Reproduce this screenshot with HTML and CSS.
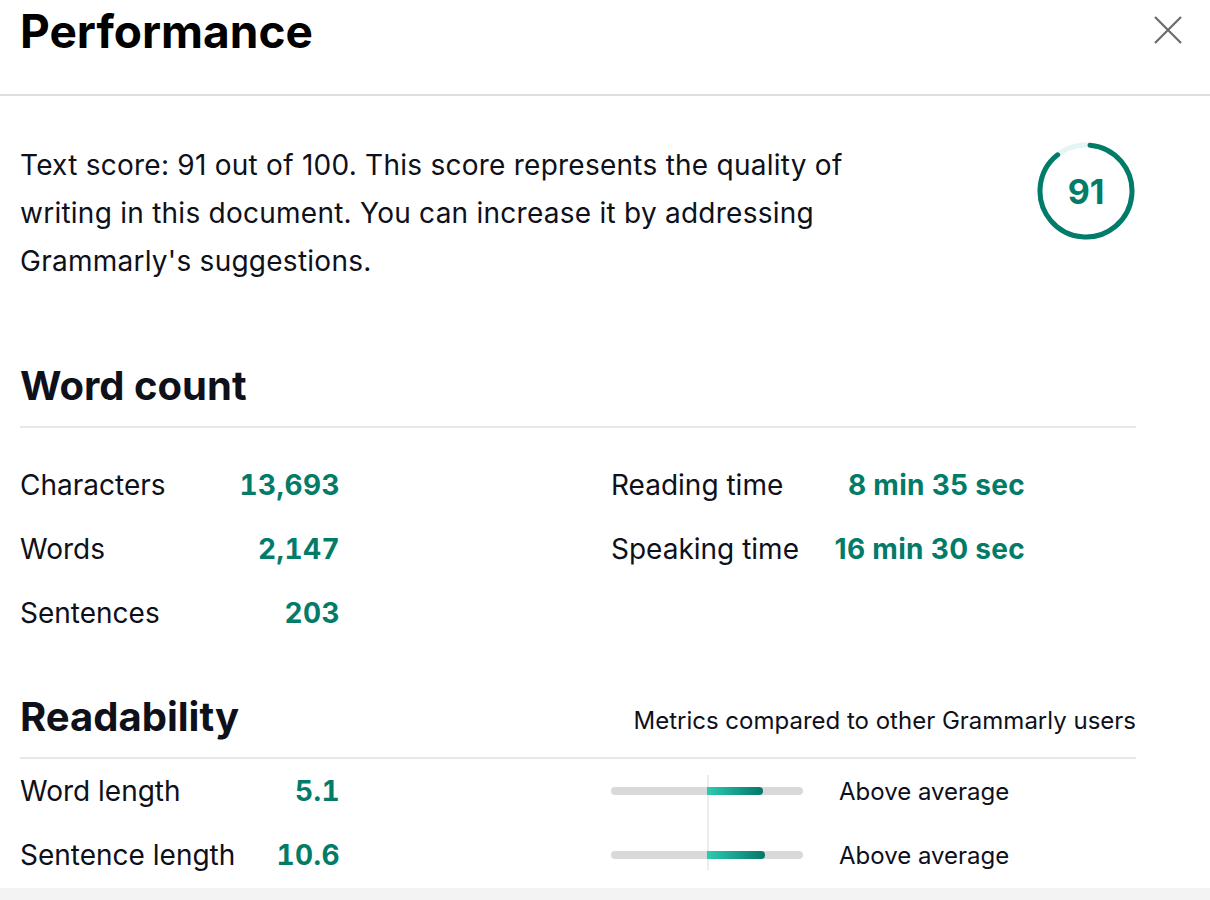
FILE: index.html
```html
<!DOCTYPE html>
<html>
<head>
<meta charset="utf-8">
<link rel="stylesheet" href="styles.css">
</head>
<body>
<div class="panel">
  <header class="top">
    <h1 class="title">Performance</h1>
    <button class="close" aria-label="Close">
      <svg width="30" height="30" viewBox="0 0 30 30"><path d="M2 2 L28 28 M28 2 L2 28" stroke="#6b6b6b" stroke-width="2.2" fill="none"/></svg>
    </button>
  </header>
  <main class="content">
    <section class="score">
      <p class="score-text">Text score: 91 out of 100. This score represents the quality of writing in this document. You can increase it by addressing Grammarly's suggestions.</p>
      <div class="ring">
        <svg width="100" height="100" viewBox="0 0 100 100">
          <circle cx="50" cy="50" r="46" fill="none" stroke="#e4f6f4" stroke-width="5"/>
          <circle cx="50" cy="50" r="46" fill="none" stroke="#037b69" stroke-width="5" stroke-linecap="round" stroke-dasharray="254 289" transform="rotate(-85 50 50)"/>
        </svg>
        <span class="ring-num">91</span>
      </div>
    </section>

    <section class="block">
      <div class="block-head">
        <h2 class="block-title">Word count</h2>
      </div>
      <div class="stats wc">
        <div class="col">
          <div class="row"><span class="label">Characters</span><span class="val">13,693</span></div>
          <div class="row"><span class="label">Words</span><span class="val">2,147</span></div>
          <div class="row"><span class="label">Sentences</span><span class="val">203</span></div>
        </div>
        <div class="col right">
          <div class="row"><span class="label">Reading time</span><span class="val">8 min 35 sec</span></div>
          <div class="row"><span class="label">Speaking time</span><span class="val">16 min 30 sec</span></div>
        </div>
      </div>
    </section>

    <section class="block read">
      <div class="block-head">
        <h2 class="block-title">Readability</h2>
        <span class="note">Metrics compared to other Grammarly users</span>
      </div>
      <div class="stats">
        <div class="col">
          <div class="row"><span class="label">Word length</span><span class="val">5.1</span></div>
          <div class="row"><span class="label">Sentence length</span><span class="val">10.6</span></div>
        </div>
        <div class="col bars">
          <div class="midline"></div>
          <div class="brow"><div class="track"><div class="fill" style="width:56px"></div></div><span class="verdict">Above average</span></div>
          <div class="brow"><div class="track"><div class="fill" style="width:58px"></div></div><span class="verdict">Above average</span></div>
        </div>
      </div>
    </section>
  </main>
  <div class="foot"></div>
</div>
</body>
</html>
```

FILE: styles.css
```css
* { box-sizing: border-box; }
html, body { margin: 0; padding: 0; background: #fff; }
body {
  font-family: Inter, "Noto Sans", "Liberation Sans", sans-serif;
  color: #0e101a;
  width: 1210px;
  height: 900px;
  overflow: hidden;
}
.panel { display: flex; flex-direction: column; height: 900px; }
.top {
  height: 96px;
  border-bottom: 2px solid #dedede;
  display: flex;
  justify-content: space-between;
  align-items: flex-start;
  padding: 0 27px 0 20px;
}
.title {
  margin: 0;
  font-size: 46px;
  font-weight: 700;
  line-height: 62px;
  color: #000;
  letter-spacing: 0;
}
.close {
  border: 0;
  background: none;
  padding: 0;
  margin-top: 15px;
  width: 30px;
  height: 30px;
  cursor: pointer;
}
.close svg { display: block; }
.content { padding: 0 74px 0 20px; flex: 1; }
.score {
  display: flex;
  justify-content: space-between;
  align-items: flex-start;
  margin-top: 45px;
}
.score-text {
  margin: 0;
  width: 860px;
  font-size: 28px;
  line-height: 48px;
  letter-spacing: 0.25px;
  color: #0e101a;
}
.ring { position: relative; width: 100px; height: 100px; }
.ring svg { display: block; }
.ring-num {
  position: absolute;
  inset: 0;
  display: flex;
  align-items: center;
  justify-content: center;
  font-size: 34px;
  font-weight: 700;
  color: #037b69;
}
.block { margin-top: 79px; }
.block.read { margin-top: 50px; }
.block-head {
  display: flex;
  justify-content: space-between;
  align-items: center;
  border-bottom: 2px solid #e8e8e8;
  padding-bottom: 18px;
}
.block-title {
  margin: 0;
  font-size: 40px;
  line-height: 44px;
  font-weight: 700;
  color: #0e101a;
}
.note { font-size: 24px; color: #0e101a; margin-top: 6px; }
.stats { display: flex; }
.stats.wc { padding-top: 25px; }
.col { width: 591px; }
.col.right { width: auto; }
.row {
  display: flex;
  height: 64px;
  align-items: center;
}
.label { font-size: 28px; width: 200px; white-space: nowrap; }
.val {
  font-size: 28px;
  font-weight: 700;
  color: #037b69;
  white-space: nowrap;
}
.col:first-child .val {
  width: 120px;
  text-align: right;
  letter-spacing: 0.4px;
  font-variant-numeric: tabular-nums;
}
.col.right .label { width: 220px; }
.col.right .val { width: 194px; text-align: right; letter-spacing: 0.3px; }
.bars { position: relative; width: auto; }
.midline {
  position: absolute;
  left: 96px;
  top: 16px;
  bottom: 17px;
  width: 2px;
  background: #ececec;
}
.brow { display: flex; align-items: center; height: 64px; }
.track {
  position: relative;
  width: 192px;
  height: 8px;
  border-radius: 4px;
  background: #d9d9d9;
  margin-right: 36px;
}
.fill {
  position: absolute;
  left: 96px;
  top: 0;
  height: 8px;
  border-radius: 0 4px 4px 0;
  background: linear-gradient(90deg, #2ccab2, #04776a);
}
.verdict { font-size: 24px; color: #0e101a; }
.foot { height: 12px; background: #f3f3f3; }
```
